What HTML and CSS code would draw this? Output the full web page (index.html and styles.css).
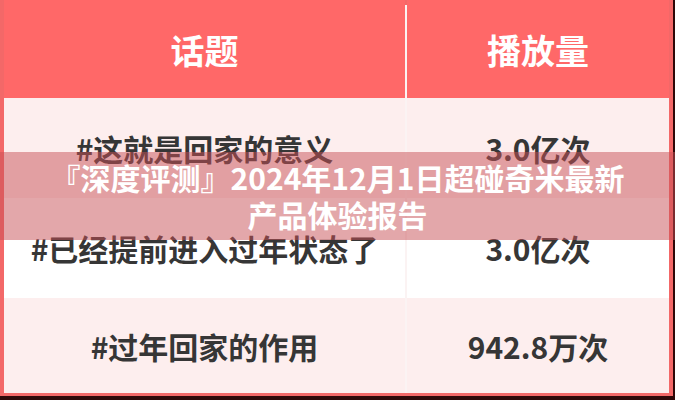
FILE: index.html
```html
<!DOCTYPE html>
<html lang="zh-CN">
<head>
<meta charset="utf-8">
<title>深度评测</title>
<link rel="stylesheet" href="styles.css">
</head>
<body>
<div class="frame">
  <div class="sheet">
    <div class="grid">
      <div class="cell head">话题</div>
      <div class="cell head">播放量</div>
      <div class="cell pink">#这就是回家的意义</div>
      <div class="cell pink">3.0亿次</div>
      <div class="cell white">#已经提前进入过年状态了</div>
      <div class="cell white">3.0亿次</div>
      <div class="cell pink">#过年回家的作用</div>
      <div class="cell pink">942.8万次</div>
    </div>
  </div>
  <div class="banner">
    <h1 class="title">『深度评测』2024年12月1日超碰奇米最新<br>产品体验报告</h1>
  </div>
</div>
</body>
</html>
```

FILE: styles.css
```css
html, body {
  margin: 0;
  padding: 0;
  background: #2e0808;
}
.frame {
  position: relative;
  width: 675px;
  height: 400px;
  box-sizing: border-box;
  padding: 0 2px 4px 0;
  background: #2e0808;
  font-family: "Noto Sans CJK SC", "Noto Sans", sans-serif;
}
.sheet {
  height: 100%;
  box-sizing: border-box;
  background: #f36868;
  padding: 5px 4px 3px 4px;
}
.grid {
  display: grid;
  grid-template-columns: 401px 262px;
  grid-template-rows: 93px 100px 100px 95px;
  column-gap: 2px;
  background: #fbf3f3;
  height: 100%;
}
.cell {
  display: flex;
  align-items: center;
  justify-content: center;
  font-size: 30px;
  font-weight: 700;
  color: #363636;
}
.head {
  background: #ff6868;
  color: #ffffff;
  font-size: 34px;
  font-weight: 700;
  margin-top: -5px;
}
.pink {
  background: #fdeeee;
}
.white {
  background: #ffffff;
}
.banner {
  position: absolute;
  left: 0;
  right: 0;
  top: 152px;
  height: 88px;
  background: rgba(200, 80, 85, 0.5);
  display: flex;
  align-items: center;
  justify-content: center;
}
.title {
  margin: 0;
  color: #ffffff;
  font-size: 30px;
  font-weight: 700;
  line-height: 37px;
  text-align: center;
}
```
